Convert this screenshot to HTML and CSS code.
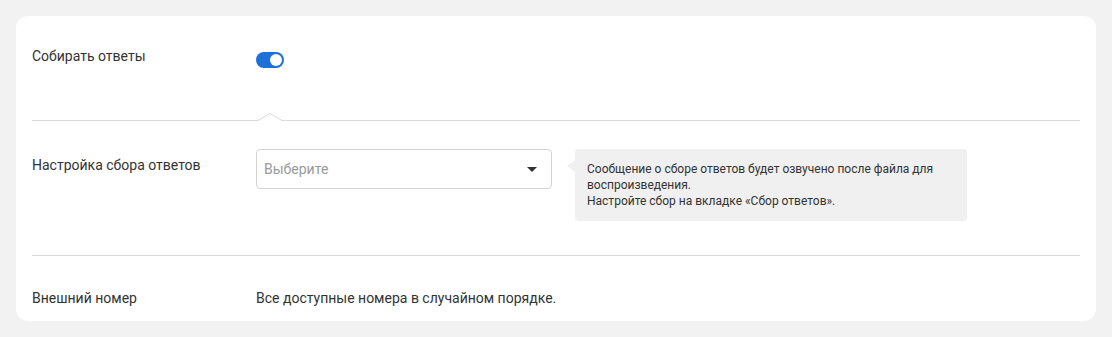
FILE: index.html
```html
<!DOCTYPE html>
<html lang="ru">
<head>
    <meta charset="UTF-8">
    <meta name="viewport" content="width=device-width, initial-scale=1.0">
    <title>Сбор ответов</title>
    <link rel="stylesheet" href="styles.css">
</head>

<body>
    <div class="card">
        <div class="section section-first">
            <div class="row">
                <div class="row-label">Собирать ответы</div>
                <div class="toggle toggle-on">
                    <span class="toggle-knob"></span>
                </div>
            </div>
            <svg class="notch" width="24" height="8" viewBox="0 0 24 8">
                <polygon points="0,8 12,0.5 24,8" fill="#fff"/>
                <polyline points="0,7.5 12,0.5 24,7.5" fill="none" stroke="#dadada" stroke-width="1"/>
            </svg>
        </div>

        <div class="section section-second">
            <div class="row">
                <div class="row-label row-label-offset">Настройка сбора ответов</div>
                <div class="select">
                    <span class="select-placeholder">Выберите</span>
                    <span class="select-arrow"></span>
                </div>
                <div class="hint">
                    Сообщение о сборе ответов будет озвучено после файла для воспроизведения.<br>
                    Настройте сбор на вкладке «Сбор ответов».
                </div>
            </div>
        </div>

        <div class="section section-last">
            <div class="row">
                <div class="row-label">Внешний номер</div>
                <div class="row-value">Все доступные номера в случайном порядке.</div>
            </div>
        </div>
    </div>
</body>
</html>
```

FILE: styles.css
```css
/* Page */
body {
    font-family: Roboto, "Liberation Sans", sans-serif;
    font-size: 14px;
    line-height: 20px;
    color: #333;
    margin: 0;
    padding: 16px;
    background-color: #f1f2f1;
}

/* Settings card */
.card {
    background-color: #fff;
    border-radius: 12px;
    padding: 0 16px;
}

.section {
    position: relative;
    border-bottom: 1px solid #dadada;
}

.section-first {
    padding: 30px 0 52px;
}

.section-second {
    padding: 28px 0 34px;
}

.section-last {
    padding: 32px 0 13px;
    border-bottom: none;
}

/* Little caret on the divider, pointing at the toggle */
.notch {
    position: absolute;
    left: 226px;
    bottom: -1px;
    display: block;
}

/* Label + control rows */
.row {
    display: flex;
    align-items: flex-start;
}

.row-label {
    width: 224px;
    flex-shrink: 0;
}

.row-label-offset {
    margin-top: 6px;
}

/* Toggle */
.toggle {
    width: 28px;
    height: 16px;
    margin-top: 6px;
    border-radius: 8px;
    background-color: #c4c4c4;
    display: flex;
    align-items: center;
    padding: 0 2px;
    box-sizing: border-box;
}

.toggle-on {
    background-color: #1f6fd9;
    justify-content: flex-end;
}

.toggle-knob {
    width: 12px;
    height: 12px;
    border-radius: 50%;
    background-color: #fff;
}

/* Select */
.select {
    width: 296px;
    height: 40px;
    box-sizing: border-box;
    border: 1px solid #d3d3d3;
    border-radius: 4px;
    display: flex;
    align-items: center;
    justify-content: space-between;
    padding: 0 14px 0 7px;
}

.select-placeholder {
    color: #9a9a9a;
}

.select-arrow {
    width: 0;
    height: 0;
    border-left: 5px solid transparent;
    border-right: 5px solid transparent;
    border-top: 5px solid #333;
}

/* Hint bubble */
.hint {
    position: relative;
    width: 392px;
    box-sizing: border-box;
    margin-left: 23px;
    padding: 12px;
    background-color: #eff0ef;
    border-radius: 4px;
    font-size: 12px;
    line-height: 16px;
}

.hint::before {
    content: "";
    position: absolute;
    left: -8px;
    top: 11px;
    border-top: 6px solid transparent;
    border-bottom: 6px solid transparent;
    border-right: 8px solid #eff0ef;
}

.row-value {
    color: #333;
}
```
